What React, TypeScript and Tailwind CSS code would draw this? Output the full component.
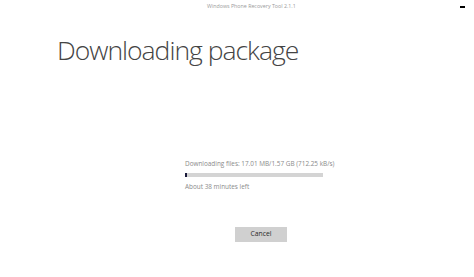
export default function App() {
  const progress = 1;

  return (
    <div className="w-[474px] h-[277px] bg-white overflow-hidden flex flex-col font-['Open_Sans','Liberation_Sans',sans-serif]">
      <div className="h-[13px] flex items-center justify-between pl-[207px] pr-[9px]">
        <span className="text-[5.3px] text-[#9a9a9a] whitespace-nowrap">Windows Phone Recovery Tool 2.1.1</span>
        <div className="shrink-0 w-[5px] h-[2px] bg-black" />
      </div>

      <h1 className="mt-[24px] ml-[57px] text-[26.5px] leading-[27px] font-light tracking-[-1px] text-[#444] whitespace-nowrap">
        Downloading package
      </h1>

      <div className="mt-[96px] ml-[185px] flex flex-col items-start">
        <p className="text-[6.4px] leading-[8px] text-[#8a8a8a] whitespace-nowrap">
          Downloading files: 17.01 MB/1.57 GB (712.25 kB/s)
        </p>
        <div className="mt-[5px] w-[138px] h-[4px] bg-[#d4d4d4] flex items-center">
          <div className="h-[4px] bg-[#1a1a3a]" style={{ width: `${progress}%`, minWidth: 2 }} />
        </div>
        <p className="mt-[6px] text-[6.4px] leading-[8px] text-[#8a8a8a] whitespace-nowrap">About 38 minutes left</p>
        <button className="mt-[36px] ml-[50px] w-[52px] h-[15px] bg-[#d0d0d0] text-[6.8px] text-[#2a2a2a] flex items-center justify-center">
          Cancel
        </button>
      </div>
    </div>
  );
}
